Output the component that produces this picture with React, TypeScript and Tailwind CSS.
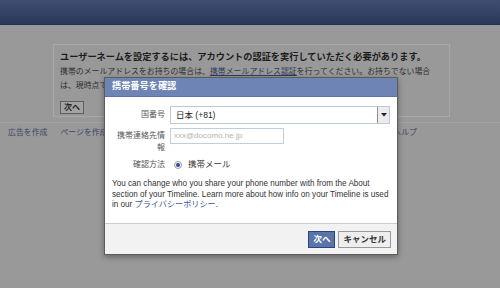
const font = 'font-["Liberation_Sans","Noto_Sans_CJK_JP",sans-serif]';

function PageBehind() {
  return (
    <div className="flex flex-col h-full">
      {/* top bar */}
      <div className="h-[25px] bg-gradient-to-b from-[#3d4f74] to-[#2a3858] border-b border-[#253150]" />

      {/* notice box */}
      <div className="pt-[19px] pl-[53px]">
        <div className="w-[397px] h-[73px] border border-[#a9a9a9] pl-[6px] pt-[6px] text-[#1c1c1c]">
          <p className="text-[9.2px] font-bold leading-[12px] whitespace-nowrap">
            ユーザーネームを設定するには、アカウントの認証を実行していただく必要があります。
          </p>
          <p className="mt-[2px] text-[7.9px] leading-[14px] text-[#2e2e2e] whitespace-nowrap">
            携帯のメールアドレスをお持ちの場合は、
            <span className="text-[#2c3a5c] underline">携帯メールアドレス認証</span>
            を行ってください。お持ちでない場合
          </p>
          <p className="text-[7.9px] leading-[14px] text-[#2e2e2e] whitespace-nowrap">
            は、現時点では携帯での認証はご利用いただけません。
          </p>
          <button className="mt-[1px] h-[13px] px-[3px] bg-[#a3a3a3] border border-[#5f5f5f] text-[8px] font-bold leading-[11px] text-[#222]">
            次へ
          </button>
        </div>
      </div>

      {/* footer links */}
      <div className="mt-[5px] border-t border-[#a2a2a2] flex items-center h-[21px] pl-[8px] pr-[83px] gap-[13px] text-[7.9px] text-[#3b4866] whitespace-nowrap">
        <span>広告を作成</span>
        <span>ページを作成</span>
        <span>開発者</span>
        <span>求人</span>
        <span className="ml-auto">ヘルプ</span>
      </div>
    </div>
  );
}

function VerifyDialog() {
  return (
    <div className="absolute left-[104px] top-[77px] w-[294px] border border-[#5c5c5c] bg-white shadow-[0_2px_6px_rgba(0,0,0,0.35)]">
      <div className="h-[19px] bg-[#6d84b4] border-b border-[#5a72a6] pl-[7px] flex items-center">
        <span className="text-white text-[9.2px] font-bold">携帯番号を確認</span>
      </div>

      <div className="px-[7px] pt-[9px] pb-[12px]">
        <div className="grid grid-cols-[53px_1fr] gap-x-[5px] gap-y-[4px] text-[8px] text-[#555]">
          <div className="text-right leading-[18px]">国番号</div>
          <div className="h-[18px] border border-[#bdc7d8] flex items-center justify-between pl-[5px]">
            <span className="text-[8.5px] text-[#222]">日本 (+81)</span>
            <span className="h-[16px] w-[12px] bg-[#ececec] border-l border-[#8f8f8f] flex items-center justify-center">
              <svg width="6" height="4" viewBox="0 0 6 4">
                <path d="M0 0h6L3 3.5z" fill="#222" />
              </svg>
            </span>
          </div>

          <div className="text-right leading-[12px] pt-[2px]">携帯連絡先情報</div>
          <div>
            <div className="w-[114px] h-[16px] border border-[#c4ccdb] flex items-center pl-[3px] text-[8px] text-[#b3b3b3]">
              xxx@docomo.ne.jp
            </div>
          </div>

          <div className="text-right leading-[12px] pt-[1px]">確認方法</div>
          <div className="flex items-center gap-[6px] pl-[4px] h-[13px]">
            <span className="w-[8px] h-[8px] rounded-full border border-[#9aa3b3] bg-[#eef1f6] flex items-center justify-center">
              <span className="w-[4px] h-[4px] rounded-full bg-[#2d4f8c]" />
            </span>
            <span className="text-[8.5px] text-[#333]">携帯メール</span>
          </div>
        </div>

        <p className="mt-[8px] text-[8.15px] leading-[10.7px] text-[#333]">
          You can change who you share your phone number with from the About section of your Timeline. Learn more about how info on your Timeline is used in our{' '}
          <span className="text-[#3b5998]">プライバシーポリシー</span>.
        </p>
      </div>

      <div className="h-[31px] bg-[#f2f2f2] border-t border-[#cccccc] flex items-center justify-end gap-[3px] pr-[6px]">
        <button className="h-[17px] px-[4px] bg-[#5b74a8] border border-[#29447e] text-white text-[8.5px] font-bold">
          次へ
        </button>
        <button className="h-[17px] px-[4px] bg-[#eeeeee] border border-[#999] text-[#333] text-[8.5px] font-bold">
          キャンセル
        </button>
      </div>
    </div>
  );
}

export default function App() {
  return (
    <div className={`relative w-[500px] h-[288px] overflow-hidden bg-[#999999] ${font}`}>
      <PageBehind />
      <VerifyDialog />
    </div>
  );
}
